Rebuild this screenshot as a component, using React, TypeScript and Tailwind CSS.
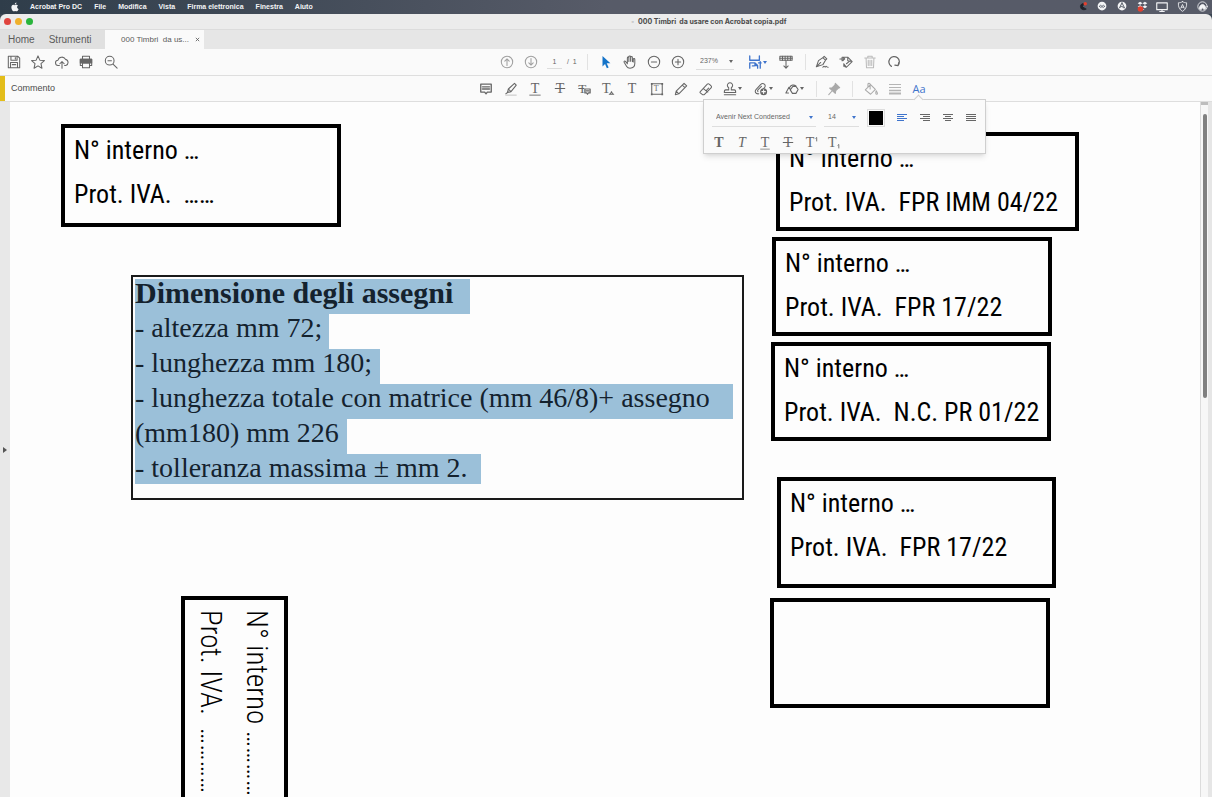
import { useState, type ReactNode } from 'react';

const MENUS = ['File', 'Modifica', 'Vista', 'Firma elettronica', 'Finestra', 'Aiuto'];

type StampData = {
  id: string;
  box: string;
  lines: string[];
};

const STAMPS: StampData[] = [
  { id: 'a', box: 'left-[51px] top-[22px] w-[280px] h-[103px]', lines: ['N° interno …', 'Prot. IVA.  ……'] },
  { id: 'b', box: 'left-[766px] top-[30px] w-[303px] h-[99px]', lines: ['N° interno …', 'Prot. IVA.  FPR IMM 04/22'] },
  { id: 'c', box: 'left-[762px] top-[135px] w-[280px] h-[99px]', lines: ['N° interno …', 'Prot. IVA.  FPR 17/22'] },
  { id: 'd', box: 'left-[761px] top-[240px] w-[280px] h-[99px]', lines: ['N° interno …', 'Prot. IVA.  N.C. PR 01/22'] },
  { id: 'e', box: 'left-[767px] top-[375px] w-[279px] h-[111px]', lines: ['N° interno …', 'Prot. IVA.  FPR 17/22'] },
  { id: 'f', box: 'left-[760px] top-[496px] w-[280px] h-[110px]', lines: [] },
];

const SELECTED_LINES = [
  { text: 'Dimensione degli assegni', className: 'w-[335px] h-[35px] text-[30px] font-bold' },
  { text: '- altezza mm 72;', className: 'w-[194px] h-[35px] text-[28px]' },
  { text: '- lunghezza mm 180;', className: 'w-[245px] h-[35px] text-[28px]' },
  { text: '- lunghezza totale con matrice (mm 46/8)+ assegno', className: 'w-[598px] h-[35px] text-[28px]' },
  { text: '(mm180) mm 226', className: 'w-[212px] h-[35px] text-[28px]' },
  { text: '- tolleranza massima ± mm 2.', className: 'w-[346px] h-[30px] text-[28px]' },
];

function Icon({ children, className = 'size-[14px]' }: { children: ReactNode; className?: string }) {
  return (
    <svg
      viewBox="0 0 16 16"
      className={className}
      fill="none"
      stroke="currentColor"
      strokeWidth="1.2"
      strokeLinejoin="round"
      strokeLinecap="round"
      aria-hidden="true"
    >
      {children}
    </svg>
  );
}

function Tee({ x = 8, y = 13, size = 16, bold = false, italic = false }: { x?: number; y?: number; size?: number; bold?: boolean; italic?: boolean }) {
  return (
    <text
      x={x}
      y={y}
      textAnchor="middle"
      fontSize={size}
      fontFamily="'Liberation Serif', serif"
      fontWeight={bold ? 700 : 400}
      fontStyle={italic ? 'italic' : 'normal'}
      fill="currentColor"
      stroke="none"
    >
      T
    </text>
  );
}

function Caret() {
  return (
    <svg viewBox="0 0 4 3" className="h-[3px] w-[4px] shrink-0" fill="currentColor" aria-hidden="true">
      <path d="M0 0h4L2 3z" />
    </svg>
  );
}

function ToolButton({
  label,
  className = 'w-6',
  children,
}: {
  label: string;
  className?: string;
  children: ReactNode;
}) {
  return (
    <button type="button" aria-label={label} className={`flex h-6 shrink-0 items-center justify-center ${className}`}>
      {children}
    </button>
  );
}

function MenuBar() {
  return (
    <div className="flex h-[14px] shrink-0 items-center bg-linear-to-r from-[#2f3d4a] to-[#575b68] to-50% text-[7px] font-semibold text-gray-100">
      <button type="button" aria-label="Apple" className="flex w-[30px] justify-center">
        <svg viewBox="0 0 24 24" className="size-[10px]" fill="currentColor" aria-hidden="true">
          <path d="M17 12.6c0-2.600 2.100-3.900 2.200-4-1.200-1.800-3.100-2-3.700-2-1.600-.2-3.100.9-3.900.9s-2-.9-3.300-.9C6.600 6.700 5 7.600 4.200 9.100c-1.900 3.200-.5 8 1.300 10.600.9 1.300 2 2.700 3.400 2.700s1.900-.9 3.500-.9 2.100.9 3.500.9 2.400-1.300 3.300-2.600c1-1.500 1.500-2.900 1.500-3-.1 0-3.700-1.300-3.700-4.200zM14.400 4.700c.7-.9 1.200-2.100 1.100-3.300-1.100 0-2.400.7-3.100 1.600-.7.800-1.300 2-1.100 3.200 1.200.1 2.400-.6 3.100-1.500z" />
        </svg>
      </button>
      <nav className="flex gap-3">
        <button type="button" className="font-bold">Acrobat Pro DC</button>
        {MENUS.map((menu) => (
          <button key={menu} type="button">{menu}</button>
        ))}
      </nav>
      <div className="ml-auto flex">
        <span className="flex w-5 justify-center">
          <Icon className="size-[11px]">
            <path d="M13 12c-4 2-8 0-8-4 0-3 3-5 5-4l-2 4z" fill="#1d222b" stroke="#1d222b" />
            <circle cx="12" cy="4" r="2.600" fill="#e2402f" stroke="none" />
          </Icon>
        </span>
        <span className="flex w-5 justify-center">
          <Icon className="size-[10px]">
            <circle cx="8" cy="8" r="7" fill="currentColor" stroke="none" />
            <path d="M4 9c0-3 3-3 4 0 1-3 4-3 4 0M4 9c1 2 3 1 4 0 1 1 3 2 4 0" stroke="#4f5561" />
          </Icon>
        </span>
        <span className="flex w-5 justify-center">
          <Icon className="size-[10px]">
            <circle cx="8" cy="8" r="7" fill="currentColor" stroke="none" />
            <path d="M8 3L4 11M8 3l4 8M5.500 9.500c2-1.500 4-1 5 1.500" stroke="#4f5561" strokeWidth="1.500" />
          </Icon>
        </span>
        <span className="flex w-5 justify-center">
          <Icon className="size-[11px]">
            <path d="M4.500 1L8 3.300 4.500 5.600 1 3.300zM11.500 1L15 3.300l-3.500 2.300L8 3.300zM4.500 6L8 8.300l-3.500 2.300L1 8.300zM11.500 6L15 8.300l-3.500 2.300L8 8.300zM11 11.500l-3 2-3-2" fill="currentColor" stroke="none" />
            <circle cx="5" cy="11.500" r="4" fill="#e2402f" stroke="none" />
          </Icon>
        </span>
        <span className="flex w-5 justify-center">
          <Icon className="size-[12px]">
            <path d="M1 2.500h14v9H1zM5 14h6M8 12v2" strokeWidth="1.500" />
          </Icon>
        </span>
        <span className="flex w-5 justify-center">
          <Icon className="size-[11px]">
            <path d="M8 1c2 1.200 4 1.600 6 1.600C14.500 9 12 13 8 15 4 13 1.500 9 2 2.600 4 2.600 6 2.200 8 1z" />
            <path d="M5.500 10.500L8 5l2.500 5.500M6.500 9h3" />
          </Icon>
        </span>
        <span className="flex w-5 justify-center">
          <Icon className="size-[11px]">
            <circle cx="8" cy="8" r="6.800" />
            <path d="M3.500 11c0-8 9-8 9 0L10 12.500 8 9.500 6 12.500z" fill="currentColor" />
          </Icon>
        </span>
      </div>
    </div>
  );
}

function TitleBar() {
  return (
    <div className="grid h-[15px] shrink-0 grid-cols-[100px_1fr_100px] items-center rounded-t-md bg-[#ececec]">
      <div className="flex gap-1 pl-1">
        <button type="button" aria-label="Chiudi" className="size-[7px] rounded-full bg-[#e0443e]" />
        <button type="button" aria-label="Riduci" className="size-[7px] rounded-full bg-[#efb02c]" />
        <button type="button" aria-label="Ingrandisci" className="size-[7px] rounded-full bg-[#29b43b]" />
      </div>
      <h1 className="flex items-center justify-center gap-1 pl-[206px] font-[Inter,sans-serif] text-[7px] leading-[10px] font-bold whitespace-pre text-[#4a4a4a]">
        <span className="text-[#999999]">▫</span>
        000 Timbri  da usare con Acrobat copia.pdf
      </h1>
    </div>
  );
}

function TabBar() {
  return (
    <div className="flex h-5 shrink-0 items-stretch border-t border-[#dcdcdc] bg-[#e6e6e6] text-[#5b5b5b]">
      <div className="flex w-[105px] items-center gap-[14px] bg-[#e0e0e0] pl-2 text-[10px]">
        <button type="button">Home</button>
        <button type="button">Strumenti</button>
      </div>
      <div className="flex w-[99px] items-center justify-between bg-[#fafafa] pr-1 pl-4 text-[8px]">
        <button type="button" className="whitespace-pre">000 Timbri  da us...</button>
        <button type="button" aria-label="Chiudi scheda">
          <svg viewBox="0 0 6 6" className="size-[5px]" stroke="currentColor" aria-hidden="true">
            <path d="M1 1l4 4M5 1L1 5" />
          </svg>
        </button>
      </div>
    </div>
  );
}

function MainToolbar() {
  return (
    <div className="flex h-[27px] shrink-0 items-center border-b border-[#dedede] bg-[#fafafa] text-[#666666]">
      <div className="flex flex-1 items-center pl-[2px]">
        <ToolButton label="Salva">
          <Icon><path d="M1.500 1.500h11l2 2v11h-13zM4.500 1.500v4.500h7v-4.500M4 14.500v-6h8v6M6 11h4M9.500 3v1.500" /></Icon>
        </ToolButton>
        <ToolButton label="Preferiti">
          <Icon><path d="M8 1l2.100 4.900 5.200.5-3.900 3.500 1.100 5.200L8 12.400l-4.500 2.700 1.100-5.200L.7 6.400l5.200-.5z" /></Icon>
        </ToolButton>
        <ToolButton label="Carica">
          <Icon><path d="M5 12H3.800a3 3 0 0 1-.4-6A4.600 4.600 0 0 1 12 5a3.600 3.600 0 0 1 .3 7H11M8 15V7.500M5.500 10L8 7.500l2.500 2.500" /></Icon>
        </ToolButton>
        <ToolButton label="Stampa">
          <Icon>
            <path d="M4 5V1.500h8V5M4 12H1.500V5h13v7H12M4 9h8v5.500H4z" />
            <path d="M1.500 5h13v4h-13z" fill="currentColor" />
          </Icon>
        </ToolButton>
        <ToolButton label="Cerca" className="w-[26px]">
          <Icon><circle cx="6.500" cy="6.500" r="5" /><path d="M10.300 10.300l4.700 4.700M4.500 6.500h4" /></Icon>
        </ToolButton>
      </div>

      <div className="flex shrink-0 items-center">
        <ToolButton label="Pagina precedente">
          <Icon className="size-[14px] text-[#a0a0a0]"><circle cx="8" cy="8" r="6.500" /><path d="M8 12V4.500M5.500 7L8 4.500 10.500 7" /></Icon>
        </ToolButton>
        <ToolButton label="Pagina successiva">
          <Icon className="size-[14px] text-[#a0a0a0]"><circle cx="8" cy="8" r="6.500" /><path d="M8 4v7.500M5.500 9L8 11.500 10.500 9" /></Icon>
        </ToolButton>
        <input
          aria-label="Numero di pagina"
          defaultValue="1"
          className="ml-1 h-[14px] w-[15px] border-b border-[#dddddd] text-center text-[7px]"
        />
        <span className="w-6 pl-[5px] text-[7px]">/&nbsp; 1</span>
        <span className="mr-[5px] ml-px h-4 w-px bg-[#e2e2e2]" />
        <ToolButton label="Seleziona" className="w-[25px]">
          <svg viewBox="0 0 16 16" className="size-[14px]" fill="#1473c8" aria-hidden="true">
            <path d="M4 1l9 8.500H8.800l2.200 4.700-2 .9-2.100-4.800L4 13z" />
          </svg>
        </ToolButton>
        <ToolButton label="Mano">
          <Icon>
            <path d="M5 10L2.800 7.300c-.8-1-2 0-1.500 1l2.900 4.900c.8 1.300 2 1.900 3.800 1.900 3.500 0 5.500-1.900 5.500-5.300V5c0-1.300-1.800-1.300-1.800 0M5 9.500V3.300C5 2 6.700 2 6.700 3.300v4M6.700 7V2.200c0-1.400 2-1.400 2 0V7M8.700 7V2.800c0-1.300 2-1.300 2 0v4.700M11.700 5v3" />
          </Icon>
        </ToolButton>
        <ToolButton label="Riduci zoom">
          <Icon><circle cx="8" cy="8" r="6.500" /><path d="M5 8h6" /></Icon>
        </ToolButton>
        <ToolButton label="Aumenta zoom">
          <Icon><circle cx="8" cy="8" r="6.500" /><path d="M5 8h6M8 5v6" /></Icon>
        </ToolButton>
        <div className="ml-[6px] flex h-[16px] w-[38px] items-center border-b border-[#dddddd] pr-px">
          <select aria-label="Zoom" className="flex-1 appearance-none pl-1 text-[7px]">
            <option>237%</option>
          </select>
          <Caret />
        </div>
        <ToolButton label="Adatta pagina" className="ml-[11px] w-6 gap-px text-[#3f74cc]">
          <Icon>
            <path d="M2 1v5h11V1M2 15V9h6l3 3v3M8 9v3h3M12 9h3M14 7.500V15M5 12.500h2" strokeWidth="1.500" />
          </Icon>
          <Caret />
        </ToolButton>
        <ToolButton label="Barra degli strumenti" className="ml-[5px] w-6">
          <Icon>
            <path d="M1 1.500h14V6H1z" />
            <path d="M1 3.700h14M4 1.500V6M7 1.500V6M10 1.500V6M13 1.500V6M8 6.500V15M5.500 12.500L8 15l2.500-2.500" />
          </Icon>
        </ToolButton>
        <span className="mr-[4px] ml-[7px] h-4 w-px bg-[#e2e2e2]" />
        <ToolButton label="Firma">
          <Icon><path d="M1.500 13.500L4 6.500l5-3.500 3 3-3 5zM1.500 13.500l5-5M9 3l1.500-1.500 3 3L12 6M9 14c2-3 2 1 3-.5s1 .5 3 .5" /></Icon>
        </ToolButton>
        <ToolButton label="Evidenzia">
          <Icon><path d="M3.500 6.500V2.500h6.500l5 5-6.500 6.500-3-1v-3M1 4.500h5.500M4.500 2.500l2 2-2 2M10 2.500v4l5 1M5.500 10l3 4M8.500 10l3-2.500" /></Icon>
        </ToolButton>
        <ToolButton label="Elimina">
          <Icon className="size-[14px] text-[#bbbbbb]"><path d="M2 3.500h12M5.500 3.500V1.500h5v2M3.500 3.500l.5 11h8l.5-11M6 6v6M8 6v6M10 6v6" /></Icon>
        </ToolButton>
        <ToolButton label="Ruota">
          <Icon><path d="M5 13A6 6 0 1 1 12.500 12M13.500 8.500l-.8 3.700-3.700-.7" strokeWidth="1.400" /></Icon>
        </ToolButton>
      </div>
      <div className="w-[306px] shrink" />
    </div>
  );
}

function AlignIcon({ d }: { d: string }) {
  return (
    <svg viewBox="0 0 12 10" className="h-[10px] w-[12px]" stroke="currentColor" aria-hidden="true">
      <path d={d} />
    </svg>
  );
}

function TextStylePanel() {
  return (
    <div
      role="dialog"
      aria-label="Proprietà testo"
      className="absolute top-[23px] right-[-55px] z-10 h-[55px] w-[283px] border border-[#cfcfcf] bg-[#fafafa] pt-[9px] pl-2 text-[#666666] shadow-md"
    >
      <span className="absolute -top-[4px] right-[63px] size-[7px] rotate-45 border-t border-l border-[#cfcfcf] bg-[#fafafa]" />
      <div className="flex h-[18px] items-center">
        <div className="flex h-full w-[104px] items-center border-b border-[#dedede] pr-[3px] text-[#3f74cc]">
          <select aria-label="Carattere" className="flex-1 appearance-none pl-1 text-[7px] text-[#666666]">
            <option>Avenir Next Condensed</option>
          </select>
          <Caret />
        </div>
        <div className="ml-2 flex h-full w-[35px] items-center border-b border-[#dedede] pr-[3px] text-[#3f74cc]">
          <select aria-label="Dimensione carattere" className="w-6 flex-1 appearance-none pl-1 text-[7px] text-[#666666]">
            <option>14</option>
          </select>
          <Caret />
        </div>
        <button type="button" aria-label="Colore testo" className="mr-[5px] ml-2 size-[18px] border border-[#dedede] p-px">
          <span className="block size-full bg-black" />
        </button>
        <ToolButton label="Allinea a sinistra" className="w-[23px] text-[#3f74cc]">
          <AlignIcon d="M1 1.500h10M1 3.500h7M1 5.500h10M1 7.500h7" />
        </ToolButton>
        <ToolButton label="Allinea a destra" className="w-[23px]">
          <AlignIcon d="M1 1.500h10M4 3.500h7M1 5.500h10M4 7.500h7" />
        </ToolButton>
        <ToolButton label="Centra" className="w-[23px]">
          <AlignIcon d="M1 1.500h10M3 3.500h6M1 5.500h10M3 7.500h6" />
        </ToolButton>
        <ToolButton label="Giustifica" className="w-[23px]">
          <AlignIcon d="M1 1.500h10M1 3.500h10M1 5.500h10M1 7.500h10" />
        </ToolButton>
      </div>
      <div className="-ml-[5px] flex h-[28px] items-center pt-[4px]">
        <ToolButton label="Grassetto" className="w-[23px]"><Icon><Tee bold /></Icon></ToolButton>
        <ToolButton label="Corsivo" className="w-[23px]"><Icon><Tee italic /></Icon></ToolButton>
        <ToolButton label="Sottolineato" className="w-[23px]">
          <Icon><Tee y={12} /><path d="M3 15h10" strokeWidth="0.800" /></Icon>
        </ToolButton>
        <ToolButton label="Barrato" className="w-[23px]">
          <Icon><Tee /><path d="M2.500 7.500h11" /></Icon>
        </ToolButton>
        <ToolButton label="Apice" className="w-[23px]">
          <Icon><Tee x={7} /><path d="M13.500 2.500l1-.8v4" strokeWidth="1" /></Icon>
        </ToolButton>
        <ToolButton label="Pedice" className="w-[23px]">
          <Icon><Tee x={6} /><path d="M12.500 10.500l1-.8v4" strokeWidth="1" /></Icon>
        </ToolButton>
      </div>
    </div>
  );
}

function CommentToolbar() {
  const [panelOpen, setPanelOpen] = useState(true);

  return (
    <div className="flex h-[26px] shrink-0 items-center border-b border-[#dedede] bg-[#fafafa] text-[#666666]">
      <div className="flex flex-1 items-center self-stretch border-l-[5px] border-[#e3bd1a] pl-[6px] text-[9px] text-[#4b4b4b]">
        Commento
      </div>
      <div className="flex shrink-0 items-center">
        <ToolButton label="Nota">
          <Icon><path d="M2 2.500h12v9H9.500L8 13.500 6.500 11.500H2zM4 5.500h8M4 8h8" strokeWidth="1.500" /></Icon>
        </ToolButton>
        <ToolButton label="Evidenziatore" className="w-[25px]">
          <Icon><path d="M4 12l1-4 7-6.500 2 2L8 11zM5 8l3 3M4 12l-2 1.500" /><path d="M2 15h12" strokeWidth="1" stroke="#bbbbbb" /></Icon>
        </ToolButton>
        <ToolButton label="Sottolinea testo">
          <Icon><Tee y={12} /><path d="M2 15h12" strokeWidth="1" /></Icon>
        </ToolButton>
        <ToolButton label="Barra testo" className="w-[25px]">
          <Icon><Tee /><path d="M2.500 7.500h11" /></Icon>
        </ToolButton>
        <ToolButton label="Sostituisci testo">
          <Icon><Tee x={6} size={15} /><path d="M2 7.500h6" /><path d="M9 8h6v4.500h-2l-1 1.500-1-1.500H9zM10.500 10.200h3" strokeWidth="1.400" /></Icon>
        </ToolButton>
        <ToolButton label="Inserisci testo">
          <Icon><Tee x={6} /><path d="M9.500 14c1.500 0 2-1.500 2.500-3 .5 1.500 1 3 2.500 3z" /></Icon>
        </ToolButton>
        <ToolButton label="Commento di testo"><Icon><Tee /></Icon></ToolButton>
        <ToolButton label="Casella di testo" className="w-[25px]">
          <Icon>
            <path d="M2 2h12v12H2z" />
            <path d="M1 1h2v2H1zM13 1h2v2h-2zM1 13h2v2H1zM13 13h2v2h-2z" fill="currentColor" stroke="none" />
            <Tee x={7} y={10} size={9} />
          </Icon>
        </ToolButton>
        <ToolButton label="Matita">
          <Icon><path d="M1.500 14.500l1-4 9-9 3 3-9 9zM2.500 10.500l3 3M9.500 3.500l3 3" /></Icon>
        </ToolButton>
        <ToolButton label="Gomma" className="w-[25px]">
          <Icon><path d="M1.500 11l8-8.500c.7-.7 1.500-.7 2.200 0l2.100 2c.7.7.7 1.400 0 2.100L6 14.500H4l-2.500-2c-.5-.5-.5-1 0-1.500zM5 7.500l5 4M8 10l3-3" /></Icon>
        </ToolButton>
        <ToolButton label="Timbro" className="w-[28px] gap-px pl-px">
          <Icon><path d="M6.500 9V6.500a3 3 0 1 1 3 0V9H13c1 0 1.500 1 1.500 3h-13c0-2 .5-3 1.500-3zM1.500 14.500h13" /></Icon>
          <Caret />
        </ToolButton>
        <ToolButton label="Allegato" className="w-[31px] gap-px pl-1">
          <Icon>
            <path d="M5.500 13.500c-4 .5-5-3-3-5l5-5.500c3-3 7 .5 4.500 3.500l-1 1M4.500 11c-1-1 0-2 .5-2.500L8.500 5" />
            <circle cx="11" cy="11" r="4" fill="currentColor" stroke="none" />
            <path d="M11 9v4M9 11h4" stroke="#fafafa" />
          </Icon>
          <Caret />
        </ToolButton>
        <ToolButton label="Forme" className="w-[31px] gap-px pl-1">
          <Icon><path d="M4 12.500H1L4.500 6l2 3.500M5.500 6A4.500 4.500 0 0 1 12.500 4.500M9 5h3.500l2.500 3.500-2.500 4.500H8.500L6 9z" /></Icon>
          <Caret />
        </ToolButton>
        <span className="mr-[5px] ml-[8px] h-4 w-px bg-[#e2e2e2]" />
        <ToolButton label="Blocca strumento">
          <Icon className="size-[14px] text-[#aaaaaa]">
            <path d="M9.500 1.500l5 5-1.500.5-3 3-.5 3L3 7l3-.5 3-3zM6 10l-4 4.500" fill="currentColor" />
          </Icon>
        </ToolButton>
        <span className="mx-[6px] h-4 w-px bg-[#e2e2e2]" />
        <ToolButton label="Riempimento">
          <Icon className="size-[14px] text-[#aaaaaa]"><path d="M1.500 9l6-6L13 8.500l-5.500 5.500zM4.500 6V2.500C4.500 1 7 1 7 2.500V8M14 10c2 3 1.500 4 .5 4s-1.500-1-.5-4z" /></Icon>
        </ToolButton>
        <ToolButton label="Spessore linea">
          <svg viewBox="0 0 14 12" className="h-3 w-[14px]" stroke="#b5b5b5" aria-hidden="true">
            <path d="M1 1.500h12M1 4.500h12" />
            <path d="M1 7.500h12" strokeWidth="1.500" />
            <path d="M1 10.500h12" strokeWidth="2" />
          </svg>
        </ToolButton>
        <div className="relative">
          <button
            type="button"
            aria-expanded={panelOpen}
            onClick={() => setPanelOpen((v) => !v)}
            className="h-6 w-6 font-['Open_Sans',sans-serif] text-[11px] text-[#3f74cc]"
          >
            Aa
          </button>
          {panelOpen && <TextStylePanel />}
        </div>
      </div>
      <div className="w-[281px] shrink" />
    </div>
  );
}

function Stamp({ box, lines }: { box: string; lines: string[] }) {
  return (
    <div className={`absolute border-4 border-black pl-[9px] ${box}`}>
      {lines.map((line) => (
        <p
          key={line}
          className="font-['Roboto_Condensed','Liberation_Sans_Narrow',sans-serif] text-[26px] leading-[44px] whitespace-pre text-black"
        >
          {line}
        </p>
      ))}
    </div>
  );
}

function Page() {
  return (
    <main className="relative flex-1 overflow-hidden bg-[#fdfdfd]">
      {STAMPS.map((stamp) => (
        <Stamp key={stamp.id} box={stamp.box} lines={stamp.lines} />
      ))}

      <div className="absolute top-[173px] left-[121px] h-[225px] w-[613px] border-2 border-[#1a1a1a] pt-[2px] pl-[2px]">
        {SELECTED_LINES.map((line) => (
          <p
            key={line.text}
            className={`bg-[#9bc0d9] font-['Liberation_Serif',serif] leading-[28px] whitespace-nowrap text-[#14222e] ${line.className}`}
          >
            {line.text}
          </p>
        ))}
      </div>

      <div className="absolute top-[494px] left-[171px] h-[300px] w-[107px] overflow-hidden border-4 border-black pt-[10px] pr-1 [writing-mode:vertical-rl]">
        <p className="font-['Roboto_Condensed','Liberation_Sans_Narrow',sans-serif] text-[29px] leading-[46px] font-light whitespace-pre text-black">
          N° interno …………
        </p>
        <p className="font-['Roboto_Condensed','Liberation_Sans_Narrow',sans-serif] text-[29px] leading-[46px] font-light whitespace-pre text-black">
          Prot. IVA.  …………
        </p>
      </div>
    </main>
  );
}

export default function App() {
  return (
    <div className="flex h-screen flex-col overflow-hidden bg-[#3c4753] font-['Liberation_Sans',sans-serif]">
      <MenuBar />
      <TitleBar />
      <TabBar />
      <MainToolbar />
      <CommentToolbar />
      <div className="flex min-h-0 flex-1">
        <button type="button" aria-label="Apri riquadro" className="flex w-[10px] items-center justify-center bg-[#e8e8e8] text-[#555555]">
          <svg viewBox="0 0 4 6" className="h-[6px] w-[4px]" fill="currentColor" aria-hidden="true">
            <path d="M0 0l4 3-4 3z" />
          </svg>
        </button>
        <Page />
        <div className="flex w-[12px] flex-col border-r-4 border-l border-r-[#e6e6e6] border-l-[#dcdcdc] bg-[#f7f7f7]">
          <div className="h-[3px] bg-[#bdbdbd]" />
          <div className="mt-[9px] ml-[2px] h-[284px] w-[4px] rounded-full bg-[#808080]" />
        </div>
      </div>
    </div>
  );
}
